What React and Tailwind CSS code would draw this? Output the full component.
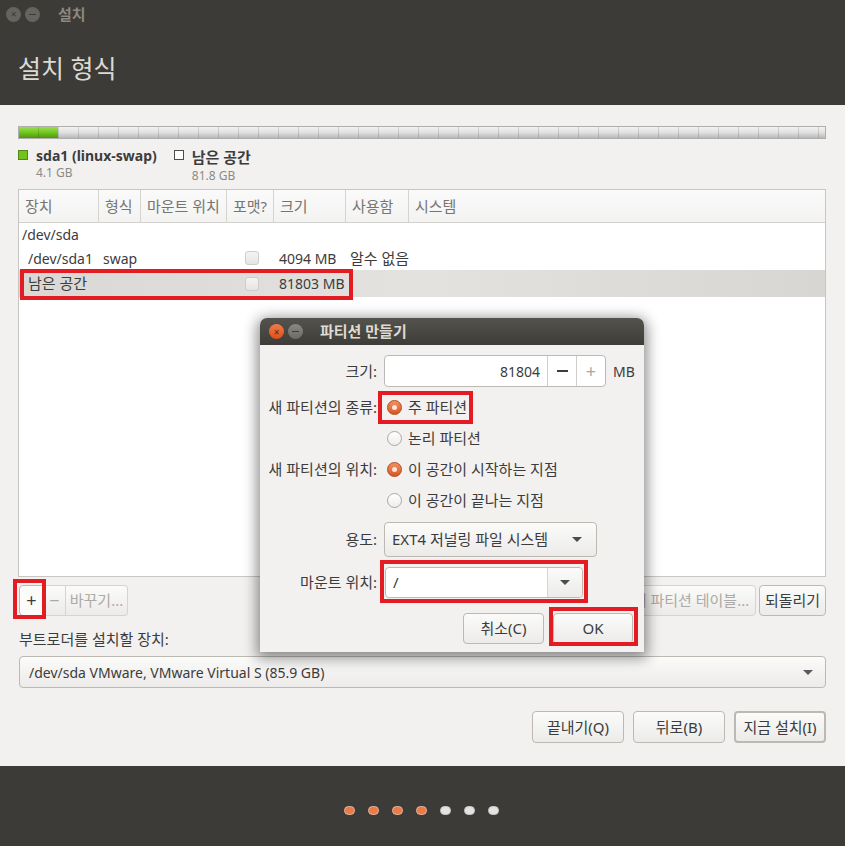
import React from "react";

const F = "font-['Noto_Sans','Noto_Sans_CJK_KR',sans-serif]";
const BOX =
  "rounded-[4px] border border-[#bcb9b3] bg-linear-to-b from-[#fbfbfa] to-[#ecebe9] flex items-center";
const BTN = `${BOX} justify-center`;
const RED = "absolute border-[4px] border-[#e31b23] pointer-events-none";

function Arrow({ color = "#4c4c4c" }) {
  return (
    <div
      className="w-0 h-0 border-l-[5px] border-r-[5px] border-t-[5px] border-l-transparent border-r-transparent"
      style={{ borderTopColor: color }}
    />
  );
}

function Radio({ on }) {
  return on ? (
    <div className="w-[15px] h-[15px] rounded-full border border-[#b3491b] bg-linear-to-b from-[#f3915f] to-[#d9531c] flex items-center justify-center shrink-0">
      <div className="w-[5px] h-[5px] rounded-full bg-[#fbe6da]" />
    </div>
  ) : (
    <div className="w-[15px] h-[15px] rounded-full border border-[#aaa7a2] bg-linear-to-b from-white to-[#ededeb] shrink-0" />
  );
}

function Check() {
  return (
    <div className="w-[14px] h-[14px] rounded-[3px] border border-[#cfcdc9] bg-linear-to-b from-[#f4f4f3] to-[#e6e5e3]" />
  );
}

const COLS = "grid grid-cols-[80px_42px_86px_47px_72px_63px_1fr]";
const K = "text-[15px]";

export default function App() {
  const headers = ["장치", "형식", "마운트 위치", "포맷?", "크기", "사용함", "시스템"];
  return (
    <div className={`w-[845px] h-[846px] flex flex-col relative overflow-hidden text-[#3c3c3c] text-[14px] ${F}`}>
      {/* header */}
      <div className="h-[105px] bg-[#3c3b37] shrink-0 flex flex-col">
        <div className="h-[28px] flex items-center pl-[6px] gap-[4px]">
          <div className="w-[15px] h-[15px] rounded-full bg-[#66645f] flex items-center justify-center text-[10px] leading-none text-[#3c3b37]">×</div>
          <div className="w-[15px] h-[15px] rounded-full bg-[#66645f] flex items-center justify-center">
            <div className="w-[7px] h-[1px] bg-[#3c3b37]" />
          </div>
          <div className="ml-[14px] text-[15px] font-bold text-[#8a8883]">설치</div>
        </div>
        <div className="mt-[25px] pl-[18px] text-[25px] leading-[30px] text-[#dcd9d2]">설치 형식</div>
      </div>

      {/* body */}
      <div className="flex-1 bg-[#f2f1f0] flex flex-col px-[18px]">
        {/* partition bar */}
        <div className="mt-[21px] relative w-[808px] h-[13px] border border-[#aeaeac] bg-linear-to-b from-[#f3f3f3] via-[#e0e0e0] to-[#b9b9b9]">
          <div className="absolute left-0 top-0 h-full w-[39px] bg-linear-to-b from-[#9be04f] via-[#72c521] to-[#4e9a06]" />
          <div className="absolute inset-0 bg-[repeating-linear-gradient(90deg,transparent_0_19px,rgba(0,0,0,0.13)_19px_20px)]" />
        </div>

        {/* legend */}
        <div className="h-[43px] mt-[7px] flex">
          <div className="flex">
            <div className="w-[10px] h-[10px] mt-[4px] bg-[#73c31f] border border-[#4e8a12]" />
            <div className="ml-[8px] flex flex-col">
              <div className="text-[14px] font-bold leading-[19px]">sda1 (linux-swap)</div>
              <div className="text-[12px] leading-[16px] text-[#8c8a86]">4.1 GB</div>
            </div>
          </div>
          <div className="flex ml-[17px]">
            <div className="w-[10px] h-[10px] mt-[4px] border border-[#4c4c4c] bg-white" />
            <div className="ml-[8px] flex flex-col">
              <div className="text-[15px] font-bold leading-[22px]">남은 공간</div>
              <div className="text-[12px] leading-[16px] text-[#8c8a86]">81.8 GB</div>
            </div>
          </div>
        </div>

        {/* table */}
        <div className="relative w-[808px] h-[388px] border border-[#c8c6c2] bg-white flex flex-col">
          <div className={`${COLS} h-[33px] border-b border-[#d3d1cd] bg-linear-to-b from-[#fafafa] to-[#f3f3f2] text-[#777571] ${K}`}>
            {headers.map((h, i) => (
              <div key={h} className={`flex items-center pl-[6px] whitespace-nowrap ${i < 6 ? "border-r border-[#d6d4d0]" : ""}`}>
                {h}
              </div>
            ))}
          </div>
          <div className="h-[23px] flex items-center pl-[3px]">/dev/sda</div>
          <div className={`${COLS} h-[24px] items-center`}>
            <div className="pl-[9px]">/dev/sda1</div>
            <div className="pl-[4px]">swap</div>
            <div />
            <div className="pl-[18px]"><Check /></div>
            <div className="pl-[5px]">4094 MB</div>
            <div className={`pl-[4px] whitespace-nowrap ${K}`}>알수 없음</div>
            <div />
          </div>
          <div className={`${COLS} h-[27px] items-center bg-linear-to-r from-[#d9d8d4] via-[#e3e2df] to-[#d7d6d2]`}>
            <div className={`pl-[9px] whitespace-nowrap ${K}`}>남은 공간</div>
            <div />
            <div />
            <div className="pl-[18px]"><Check /></div>
            <div className="pl-[5px]">81803 MB</div>
            <div />
            <div />
          </div>
          <div className={`${RED} border-[3px] left-[1px] top-[79px] w-[333px] h-[31px]`} />
        </div>

        {/* toolbar */}
        <div className={`mt-[8px] h-[31px] flex relative ${K}`}>
          <div className="flex ml-[1px]">
            <div className={`${BTN} w-[25px] rounded-r-none text-[18px] bg-none bg-[#fbfbfa]`}>+</div>
            <div className={`${BTN} w-[22px] rounded-none border-l-0 border-[#d6d4d0] text-[#acaaa6] text-[18px]`}>−</div>
            <div className={`${BTN} w-[62px] rounded-l-none border-l-0 border-[#d6d4d0] text-[#acaaa6]`}>바꾸기...</div>
          </div>
          <div className="flex-1" />
          <div className={`${BTN} w-[130px] border-[#d6d4d0] text-[#acaaa6] whitespace-nowrap`}>새 파티션 테이블...</div>
          <div className={`${BTN} w-[67px] ml-[3px] mr-[1px] whitespace-nowrap`}>되돌리기</div>
          <div className={`${RED} -left-[5px] -top-[6px] w-[33px] h-[40px]`} />
        </div>

        <div className={`mt-[14px] h-[18px] leading-[18px] pl-[1px] ${K}`}>부트로더를 설치할 장치:</div>
        <div className={`${BOX} justify-between mt-[8px] h-[32px] w-[807px] ml-[1px] pl-[9px] pr-[12px]`}>
          <span>/dev/sda VMware, VMware Virtual S (85.9 GB)</span>
          <Arrow color="#5a5a5a" />
        </div>

        <div className={`mt-[23px] h-[32px] flex justify-end gap-[9px] pr-[1px] ${K}`}>
          <div className={`${BTN} w-[92px]`}>끝내기(Q)</div>
          <div className={`${BTN} w-[92px]`}>뒤로(B)</div>
          <div className={`${BTN} w-[92px] border-2 border-[#a9a6a0]`}>지금 설치(I)</div>
        </div>
      </div>

      {/* footer */}
      <div className="h-[80px] bg-[#3c3b37] shrink-0 flex justify-center items-start">
        <div className="mt-[40px] flex gap-[13px] ml-[-2px]">
          {[1, 1, 1, 1, 0, 0, 0].map((o, i) => (
            <div
              key={i}
              className={`w-[11px] h-[9px] rounded-full ${o ? "bg-[#ec7a45] border border-[#d8b9a6]" : "bg-[#e3e3e3] border border-[#c9c9c9]"}`}
            />
          ))}
        </div>
      </div>

      {/* dialog */}
      <div className={`absolute left-[260px] top-[318px] w-[384px] h-[334px] rounded-t-[7px] bg-[#f2f1f0] shadow-[0_3px_14px_3px_rgba(0,0,0,0.45)] flex flex-col ${K}`}>
        <div className="h-[27px] rounded-t-[7px] bg-linear-to-b from-[#55534d] to-[#3d3c38] flex items-center pl-[9px] gap-[4px]">
          <div className="w-[15px] h-[15px] rounded-full bg-linear-to-b from-[#f47a48] to-[#dc4f17] flex items-center justify-center text-[10px] leading-none text-[#4a2a1a]">×</div>
          <div className="w-[15px] h-[15px] rounded-full bg-linear-to-b from-[#8a8883] to-[#6d6b66] flex items-center justify-center">
            <div className="w-[7px] h-[1.5px] bg-[#3c3b37]" />
          </div>
          <div className="ml-[13px] font-bold text-[#dfdbd2]">파티션 만들기</div>
        </div>

        <div className="mt-[10px] h-[32px] flex items-center">
          <div className="w-[117px] text-right">크기:</div>
          <div className="ml-[7px] w-[222px] h-[32px] rounded-[4px] border border-[#bdbab5] bg-white flex text-[14px]">
            <div className="flex-1 flex items-center justify-end pr-[7px]">81804</div>
            <div className="w-[29px] border-l border-[#d0cecb] flex items-center justify-center">
              <div className="w-[11px] h-[2px] bg-[#3c3c3c]" />
            </div>
            <div className="w-[29px] border-l border-[#d0cecb] flex items-center justify-center text-[18px] text-[#a9a7a3]">+</div>
          </div>
          <div className="ml-[7px] text-[14px]">MB</div>
        </div>

        <div className="mt-[4px] h-[32px] flex items-center">
          <div className="w-[117px] text-right whitespace-nowrap">새 파티션의 종류:</div>
          <div className="ml-[10px] flex items-center gap-[6px]"><Radio on /><span>주 파티션</span></div>
        </div>
        <div className="h-[31px] flex items-center">
          <div className="w-[117px]" />
          <div className="ml-[10px] flex items-center gap-[6px]"><Radio /><span>논리 파티션</span></div>
        </div>
        <div className="h-[31px] flex items-center">
          <div className="w-[117px] text-right whitespace-nowrap">새 파티션의 위치:</div>
          <div className="ml-[10px] flex items-center gap-[6px]"><Radio on /><span>이 공간이 시작하는 지점</span></div>
        </div>
        <div className="h-[31px] flex items-center">
          <div className="w-[117px]" />
          <div className="ml-[10px] flex items-center gap-[6px]"><Radio /><span>이 공간이 끝나는 지점</span></div>
        </div>

        <div className="mt-[6px] h-[35px] flex items-center">
          <div className="w-[117px] text-right">용도:</div>
          <div className={`${BOX} justify-between ml-[7px] w-[213px] h-[35px] pl-[7px] pr-[14px]`}>
            <span className="whitespace-nowrap">EXT4 저널링 파일 시스템</span>
            <Arrow />
          </div>
        </div>

        <div className="mt-[10px] h-[31px] flex items-center">
          <div className="w-[117px] text-right">마운트 위치:</div>
          <div className="ml-[8px] w-[198px] h-[31px] rounded-[4px] border border-[#c9b6a8] bg-white flex">
            <div className="flex-1 flex items-center pl-[7px]">/</div>
            <div className="w-[35px] border-l border-[#d9d4cf] bg-linear-to-b from-[#fbfbfa] to-[#ecebe9] rounded-r-[4px] flex items-center justify-center">
              <Arrow />
            </div>
          </div>
        </div>

        <div className="mt-[15px] h-[31px] flex justify-end gap-[9px] pr-[11px]">
          <div className={`${BTN} w-[81px]`}>취소(C)</div>
          <div className={`${BTN} w-[80px]`}>OK</div>
        </div>

        <div className={`${RED} left-[118px] top-[73px] w-[95px] h-[33px]`} />
        <div className={`${RED} left-[120px] top-[242px] w-[208px] h-[43px]`} />
        <div className={`${RED} left-[289px] top-[289px] w-[89px] h-[39px]`} />
      </div>
    </div>
  );
}
